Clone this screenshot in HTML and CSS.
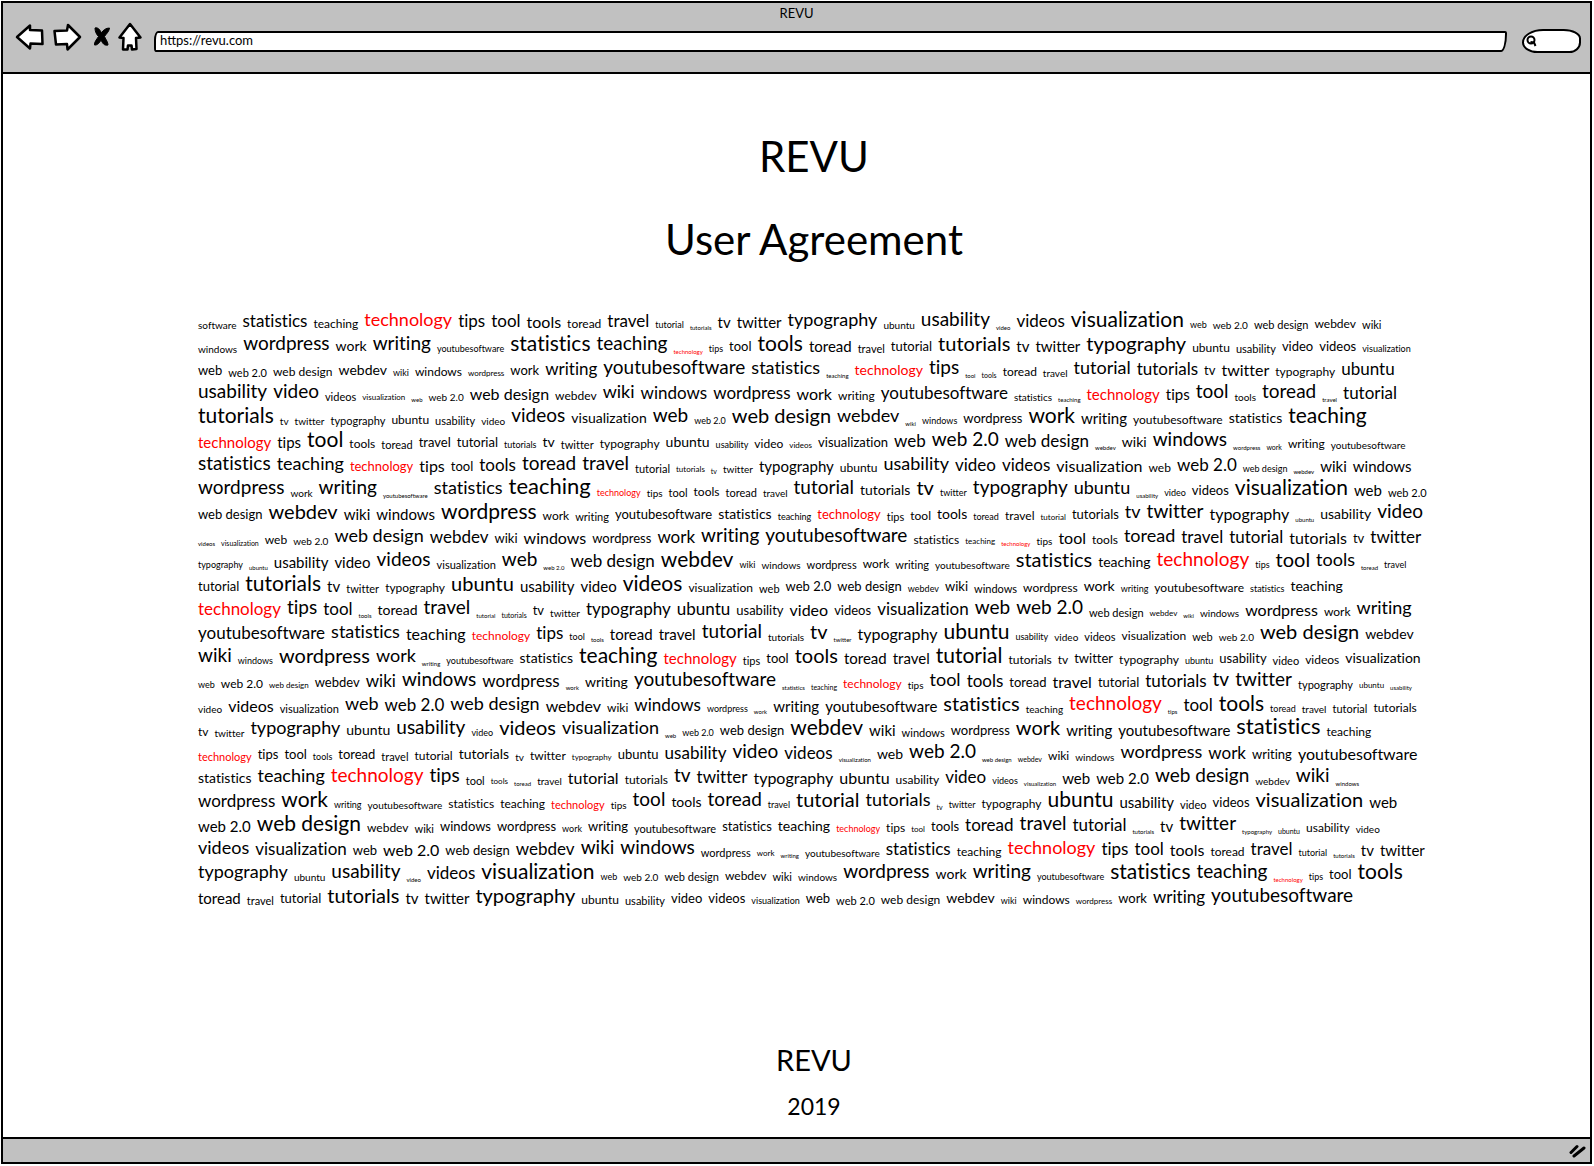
FILE: index.html
```html
<!DOCTYPE html>
<html lang="en">
<head>
<meta charset="utf-8">
<title>REVU</title>
<link rel="stylesheet" href="styles.css">
</head>
<body>
<div class="browser">
<header class="chrome">
<div class="chrome-title">REVU</div>
<div class="toolbar">
<button class="tool back" aria-label="Back"><svg width="30" height="28" viewBox="0 0 30 28"><path d="M2 14 15 2.500V7L27 7.500 27.500 21 15.500 20.500 15 25.500Z"/></svg></button>
<button class="tool forward" aria-label="Forward"><svg width="30" height="28" viewBox="0 0 30 28"><path d="M28 14 16 2 15 7.500 2.500 8 4 21.500 15 21 15.500 26.500Z"/></svg></button>
<button class="tool stop" aria-label="Stop"><svg width="18" height="22" viewBox="0 0 18 22"><path class="solid" d="M2 2C5 1 7 4 8.500 7 10 4 13 2 16.500 2 16 6 13 8 11.500 10.500 13 14 15 16 15 19 11 20 9.500 17 8 14 6.500 17 4 19.500 1.500 19 1 16 4 13 5.500 10.500 3 8 2 5 2 2Z"/></svg></button>
<button class="tool home" aria-label="Home"><svg width="24" height="30" viewBox="0 0 24 30"><path d="M12 2 1.500 15.500 5.500 16 5 27.500 9.500 27.500 10 23.500 13.500 23.500 14 27.500 18.500 27 18 16 22.500 15.500Z"/></svg></button>
<input class="address" type="text" aria-label="Address" value="https://revu.com">
<label class="search"><svg width="12" height="14" viewBox="0 0 12 14"><circle cx="5" cy="6" r="3.500"/><path d="M4.500 8 8 8.500 9.500 12"/></svg><input type="text" aria-label="Search"></label>
</div>
</header>
<main class="page">
<h1>REVU</h1>
<h2>User Agreement</h2>
<section class="cloud">
<p><span class="s10">software</span><span class="s17">statistics</span><span class="s12">teaching</span><span class="s18 hot">technology</span><span class="s17">tips</span><span class="s17">tool</span><span class="s16">tools</span><span class="s12">toread</span><span class="s17">travel</span><span class="s9">tutorial</span><span class="s6">tutorials</span><span class="s15">tv</span><span class="s15">twitter</span><span class="s18">typography</span><span class="s10">ubuntu</span><span class="s19">usability</span><span class="s6">video</span><span class="s17">videos</span><span class="s21">visualization</span><span class="s9">web</span><span class="s10">web 2.0</span><span class="s11">web design</span><span class="s12">webdev</span><span class="s11">wiki</span></p>
<p><span class="s10">windows</span><span class="s19">wordpress</span><span class="s14">work</span><span class="s19">writing</span><span class="s9">youtubesoftware</span><span class="s21">statistics</span><span class="s19">teaching</span><span class="s6 hot">technology</span><span class="s9">tips</span><span class="s13">tool</span><span class="s21">tools</span><span class="s15">toread</span><span class="s11">travel</span><span class="s13">tutorial</span><span class="s20">tutorials</span><span class="s15">tv</span><span class="s15">twitter</span><span class="s20">typography</span><span class="s12">ubuntu</span><span class="s11">usability</span><span class="s13">video</span><span class="s13">videos</span><span class="s9">visualization</span></p>
<p><span class="s13">web</span><span class="s11">web 2.0</span><span class="s12">web design</span><span class="s14">webdev</span><span class="s9">wiki</span><span class="s12">windows</span><span class="s8">wordpress</span><span class="s13">work</span><span class="s17">writing</span><span class="s19">youtubesoftware</span><span class="s18">statistics</span><span class="s6">teaching</span><span class="s14 hot">technology</span><span class="s19">tips</span><span class="s6">tool</span><span class="s7">tools</span><span class="s12">toread</span><span class="s10">travel</span><span class="s18">tutorial</span><span class="s17">tutorials</span><span class="s13">tv</span><span class="s16">twitter</span><span class="s12">typography</span><span class="s17">ubuntu</span></p>
<p><span class="s19">usability</span><span class="s19">video</span><span class="s11">videos</span><span class="s8">visualization</span><span class="s6">web</span><span class="s10">web 2.0</span><span class="s16">web design</span><span class="s12">webdev</span><span class="s18">wiki</span><span class="s17">windows</span><span class="s17">wordpress</span><span class="s16">work</span><span class="s12">writing</span><span class="s17">youtubesoftware</span><span class="s10">statistics</span><span class="s6">teaching</span><span class="s15 hot">technology</span><span class="s15">tips</span><span class="s19">tool</span><span class="s10">tools</span><span class="s19">toread</span><span class="s6">travel</span><span class="s17">tutorial</span></p>
<p><span class="s21">tutorials</span><span class="s10">tv</span><span class="s10">twitter</span><span class="s11">typography</span><span class="s12">ubuntu</span><span class="s11">usability</span><span class="s10">video</span><span class="s19">videos</span><span class="s14">visualization</span><span class="s19">web</span><span class="s9">web 2.0</span><span class="s20">web design</span><span class="s18">webdev</span><span class="s6">wiki</span><span class="s9">windows</span><span class="s13">wordpress</span><span class="s21">work</span><span class="s15">writing</span><span class="s12">youtubesoftware</span><span class="s14">statistics</span><span class="s21">teaching</span></p>
<p><span class="s15 hot">technology</span><span class="s15">tips</span><span class="s21">tool</span><span class="s12">tools</span><span class="s11">toread</span><span class="s13">travel</span><span class="s13">tutorial</span><span class="s9">tutorials</span><span class="s14">tv</span><span class="s11">twitter</span><span class="s12">typography</span><span class="s14">ubuntu</span><span class="s9">usability</span><span class="s12">video</span><span class="s8">videos</span><span class="s13">visualization</span><span class="s17">web</span><span class="s19">web 2.0</span><span class="s17">web design</span><span class="s6">webdev</span><span class="s14">wiki</span><span class="s19">windows</span><span class="s6">wordpress</span><span class="s7">work</span><span class="s12">writing</span><span class="s10">youtubesoftware</span></p>
<p><span class="s19">statistics</span><span class="s18">teaching</span><span class="s13 hot">technology</span><span class="s16">tips</span><span class="s13">tool</span><span class="s17">tools</span><span class="s19">toread</span><span class="s19">travel</span><span class="s11">tutorial</span><span class="s8">tutorials</span><span class="s7">tv</span><span class="s10">twitter</span><span class="s15">typography</span><span class="s12">ubuntu</span><span class="s18">usability</span><span class="s17">video</span><span class="s17">videos</span><span class="s16">visualization</span><span class="s12">web</span><span class="s17">web 2.0</span><span class="s9">web design</span><span class="s6">webdev</span><span class="s15">wiki</span><span class="s15">windows</span></p>
<p><span class="s19">wordpress</span><span class="s10">work</span><span class="s19">writing</span><span class="s6">youtubesoftware</span><span class="s18">statistics</span><span class="s22">teaching</span><span class="s9 hot">technology</span><span class="s10">tips</span><span class="s11">tool</span><span class="s12">tools</span><span class="s11">toread</span><span class="s10">travel</span><span class="s19">tutorial</span><span class="s14">tutorials</span><span class="s20">tv</span><span class="s9">twitter</span><span class="s19">typography</span><span class="s18">ubuntu</span><span class="s6">usability</span><span class="s9">video</span><span class="s13">videos</span><span class="s21">visualization</span><span class="s15">web</span><span class="s11">web 2.0</span></p>
<p><span class="s13">web design</span><span class="s20">webdev</span><span class="s15">wiki</span><span class="s15">windows</span><span class="s21">wordpress</span><span class="s12">work</span><span class="s11">writing</span><span class="s13">youtubesoftware</span><span class="s14">statistics</span><span class="s9">teaching</span><span class="s13 hot">technology</span><span class="s11">tips</span><span class="s12">tool</span><span class="s14">tools</span><span class="s9">toread</span><span class="s12">travel</span><span class="s8">tutorial</span><span class="s13">tutorials</span><span class="s18">tv</span><span class="s19">twitter</span><span class="s16">typography</span><span class="s6">ubuntu</span><span class="s14">usability</span><span class="s19">video</span></p>
<p><span class="s6">videos</span><span class="s7">visualization</span><span class="s12">web</span><span class="s10">web 2.0</span><span class="s18">web design</span><span class="s17">webdev</span><span class="s13">wiki</span><span class="s16">windows</span><span class="s13">wordpress</span><span class="s17">work</span><span class="s19">writing</span><span class="s19">youtubesoftware</span><span class="s12">statistics</span><span class="s8">teaching</span><span class="s6 hot">technology</span><span class="s10">tips</span><span class="s16">tool</span><span class="s12">tools</span><span class="s18">toread</span><span class="s17">travel</span><span class="s17">tutorial</span><span class="s16">tutorials</span><span class="s13">tv</span><span class="s17">twitter</span></p>
<p><span class="s9">typography</span><span class="s6">ubuntu</span><span class="s15">usability</span><span class="s15">video</span><span class="s19">videos</span><span class="s11">visualization</span><span class="s19">web</span><span class="s6">web 2.0</span><span class="s17">web design</span><span class="s21">webdev</span><span class="s9">wiki</span><span class="s10">windows</span><span class="s11">wordpress</span><span class="s12">work</span><span class="s11">writing</span><span class="s10">youtubesoftware</span><span class="s20">statistics</span><span class="s14">teaching</span><span class="s19 hot">technology</span><span class="s9">tips</span><span class="s20">tool</span><span class="s18">tools</span><span class="s6">toread</span><span class="s9">travel</span></p>
<p><span class="s13">tutorial</span><span class="s21">tutorials</span><span class="s15">tv</span><span class="s11">twitter</span><span class="s12">typography</span><span class="s20">ubuntu</span><span class="s15">usability</span><span class="s15">video</span><span class="s21">videos</span><span class="s12">visualization</span><span class="s11">web</span><span class="s13">web 2.0</span><span class="s13">web design</span><span class="s9">webdev</span><span class="s13">wiki</span><span class="s11">windows</span><span class="s12">wordpress</span><span class="s14">work</span><span class="s9">writing</span><span class="s12">youtubesoftware</span><span class="s9">statistics</span><span class="s14">teaching</span></p>
<p><span class="s17 hot">technology</span><span class="s19">tips</span><span class="s17">tool</span><span class="s6">tools</span><span class="s14">toread</span><span class="s19">travel</span><span class="s6">tutorial</span><span class="s7">tutorials</span><span class="s13">tv</span><span class="s10">twitter</span><span class="s17">typography</span><span class="s17">ubuntu</span><span class="s13">usability</span><span class="s16">video</span><span class="s13">videos</span><span class="s17">visualization</span><span class="s19">web</span><span class="s19">web 2.0</span><span class="s11">web design</span><span class="s8">webdev</span><span class="s6">wiki</span><span class="s10">windows</span><span class="s16">wordpress</span><span class="s12">work</span><span class="s18">writing</span></p>
<p><span class="s17">youtubesoftware</span><span class="s18">statistics</span><span class="s16">teaching</span><span class="s12 hot">technology</span><span class="s17">tips</span><span class="s9">tool</span><span class="s6">tools</span><span class="s15">toread</span><span class="s15">travel</span><span class="s19">tutorial</span><span class="s10">tutorials</span><span class="s20">tv</span><span class="s6">twitter</span><span class="s16">typography</span><span class="s21">ubuntu</span><span class="s9">usability</span><span class="s10">video</span><span class="s11">videos</span><span class="s12">visualization</span><span class="s11">web</span><span class="s10">web 2.0</span><span class="s20">web design</span><span class="s14">webdev</span></p>
<p><span class="s19">wiki</span><span class="s9">windows</span><span class="s20">wordpress</span><span class="s18">work</span><span class="s6">writing</span><span class="s9">youtubesoftware</span><span class="s14">statistics</span><span class="s21">teaching</span><span class="s15 hot">technology</span><span class="s11">tips</span><span class="s13">tool</span><span class="s20">tools</span><span class="s15">toread</span><span class="s15">travel</span><span class="s21">tutorial</span><span class="s12">tutorials</span><span class="s12">tv</span><span class="s13">twitter</span><span class="s12">typography</span><span class="s9">ubuntu</span><span class="s13">usability</span><span class="s11">video</span><span class="s12">videos</span><span class="s14">visualization</span></p>
<p><span class="s9">web</span><span class="s12">web 2.0</span><span class="s8">web design</span><span class="s13">webdev</span><span class="s17">wiki</span><span class="s19">windows</span><span class="s17">wordpress</span><span class="s6">work</span><span class="s14">writing</span><span class="s19">youtubesoftware</span><span class="s6">statistics</span><span class="s7">teaching</span><span class="s12 hot">technology</span><span class="s10">tips</span><span class="s18">tool</span><span class="s17">tools</span><span class="s13">toread</span><span class="s16">travel</span><span class="s13">tutorial</span><span class="s17">tutorials</span><span class="s19">tv</span><span class="s19">twitter</span><span class="s11">typography</span><span class="s8">ubuntu</span><span class="s6">usability</span></p>
<p><span class="s10">video</span><span class="s16">videos</span><span class="s11">visualization</span><span class="s18">web</span><span class="s17">web 2.0</span><span class="s18">web design</span><span class="s16">webdev</span><span class="s12">wiki</span><span class="s17">windows</span><span class="s9">wordpress</span><span class="s6">work</span><span class="s15">writing</span><span class="s15">youtubesoftware</span><span class="s20">statistics</span><span class="s10">teaching</span><span class="s19 hot">technology</span><span class="s6">tips</span><span class="s17">tool</span><span class="s21">tools</span><span class="s9">toread</span><span class="s10">travel</span><span class="s11">tutorial</span><span class="s12">tutorials</span></p>
<p><span class="s12">tv</span><span class="s10">twitter</span><span class="s18">typography</span><span class="s14">ubuntu</span><span class="s19">usability</span><span class="s9">video</span><span class="s20">videos</span><span class="s18">visualization</span><span class="s6">web</span><span class="s9">web 2.0</span><span class="s13">web design</span><span class="s21">webdev</span><span class="s15">wiki</span><span class="s11">windows</span><span class="s13">wordpress</span><span class="s20">work</span><span class="s15">writing</span><span class="s15">youtubesoftware</span><span class="s22">statistics</span><span class="s12">teaching</span></p>
<p><span class="s11 hot">technology</span><span class="s13">tips</span><span class="s13">tool</span><span class="s9">tools</span><span class="s13">toread</span><span class="s11">travel</span><span class="s12">tutorial</span><span class="s14">tutorials</span><span class="s10">tv</span><span class="s12">twitter</span><span class="s8">typography</span><span class="s13">ubuntu</span><span class="s17">usability</span><span class="s19">video</span><span class="s17">videos</span><span class="s6">visualization</span><span class="s14">web</span><span class="s19">web 2.0</span><span class="s6">web design</span><span class="s7">webdev</span><span class="s12">wiki</span><span class="s10">windows</span><span class="s18">wordpress</span><span class="s17">work</span><span class="s13">writing</span><span class="s16">youtubesoftware</span></p>
<p><span class="s14">statistics</span><span class="s18">teaching</span><span class="s19 hot">technology</span><span class="s19">tips</span><span class="s11">tool</span><span class="s8">tools</span><span class="s6">toread</span><span class="s10">travel</span><span class="s16">tutorial</span><span class="s12">tutorials</span><span class="s19">tv</span><span class="s17">twitter</span><span class="s16">typography</span><span class="s16">ubuntu</span><span class="s12">usability</span><span class="s17">video</span><span class="s9">videos</span><span class="s6">visualization</span><span class="s15">web</span><span class="s15">web 2.0</span><span class="s19">web design</span><span class="s10">webdev</span><span class="s19">wiki</span><span class="s6">windows</span></p>
<p><span class="s17">wordpress</span><span class="s21">work</span><span class="s9">writing</span><span class="s10">youtubesoftware</span><span class="s12">statistics</span><span class="s12">teaching</span><span class="s11 hot">technology</span><span class="s10">tips</span><span class="s19">tool</span><span class="s14">tools</span><span class="s19">toread</span><span class="s9">travel</span><span class="s20">tutorial</span><span class="s18">tutorials</span><span class="s7">tv</span><span class="s9">twitter</span><span class="s12">typography</span><span class="s21">ubuntu</span><span class="s15">usability</span><span class="s11">video</span><span class="s13">videos</span><span class="s20">visualization</span><span class="s15">web</span></p>
<p><span class="s15">web 2.0</span><span class="s21">web design</span><span class="s12">webdev</span><span class="s11">wiki</span><span class="s13">windows</span><span class="s13">wordpress</span><span class="s9">work</span><span class="s13">writing</span><span class="s11">youtubesoftware</span><span class="s13">statistics</span><span class="s14">teaching</span><span class="s9 hot">technology</span><span class="s12">tips</span><span class="s8">tool</span><span class="s13">tools</span><span class="s17">toread</span><span class="s19">travel</span><span class="s17">tutorial</span><span class="s6">tutorials</span><span class="s15">tv</span><span class="s19">twitter</span><span class="s6">typography</span><span class="s7">ubuntu</span><span class="s12">usability</span><span class="s10">video</span></p>
<p><span class="s18">videos</span><span class="s17">visualization</span><span class="s13">web</span><span class="s16">web 2.0</span><span class="s13">web design</span><span class="s17">webdev</span><span class="s19">wiki</span><span class="s19">windows</span><span class="s11">wordpress</span><span class="s8">work</span><span class="s6">writing</span><span class="s10">youtubesoftware</span><span class="s17">statistics</span><span class="s12">teaching</span><span class="s18 hot">technology</span><span class="s17">tips</span><span class="s17">tool</span><span class="s16">tools</span><span class="s12">toread</span><span class="s17">travel</span><span class="s9">tutorial</span><span class="s6">tutorials</span><span class="s15">tv</span><span class="s15">twitter</span></p>
<p><span class="s18">typography</span><span class="s10">ubuntu</span><span class="s19">usability</span><span class="s6">video</span><span class="s17">videos</span><span class="s21">visualization</span><span class="s9">web</span><span class="s10">web 2.0</span><span class="s11">web design</span><span class="s12">webdev</span><span class="s11">wiki</span><span class="s10">windows</span><span class="s19">wordpress</span><span class="s14">work</span><span class="s19">writing</span><span class="s9">youtubesoftware</span><span class="s21">statistics</span><span class="s19">teaching</span><span class="s6 hot">technology</span><span class="s9">tips</span><span class="s13">tool</span><span class="s21">tools</span></p>
<p><span class="s15">toread</span><span class="s11">travel</span><span class="s13">tutorial</span><span class="s20">tutorials</span><span class="s15">tv</span><span class="s15">twitter</span><span class="s20">typography</span><span class="s12">ubuntu</span><span class="s11">usability</span><span class="s13">video</span><span class="s13">videos</span><span class="s9">visualization</span><span class="s13">web</span><span class="s11">web 2.0</span><span class="s12">web design</span><span class="s14">webdev</span><span class="s9">wiki</span><span class="s12">windows</span><span class="s8">wordpress</span><span class="s13">work</span><span class="s17">writing</span><span class="s19">youtubesoftware</span></p>
</section>
<footer class="page-foot">
<p class="brand">REVU</p>
<p class="year">2019</p>
</footer>
</main>
<div class="statusbar"><svg width="18" height="16" viewBox="0 0 18 16"><path d="M2 9.500 8 3.500M5 13 15 5"/></svg></div>
</div>
</body>
</html>
```
FILE: styles.css
```css
* { box-sizing: border-box; }
body {
  margin: 0;
  padding: 1px 2px 2px 1px;
  background: #fff;
  color: #000;
  font-family: Lato, "Liberation Sans", sans-serif;
  font-variant-ligatures: none;
}
h1, h2, p { margin: 0; font-weight: 400; }
.browser {
  display: flex;
  flex-direction: column;
  min-height: calc(100vh - 3px);
  border: 2px solid #000;
}
.chrome {
  height: 71px;
  background: #c1c1c1;
  border-bottom: 2px solid #000;
}
.chrome-title {
  height: 20px;
  font-size: 13px;
  line-height: 20px;
  text-align: center;
}
.toolbar {
  display: flex;
  align-items: center;
  height: 28px;
  padding: 0 9px 0 12px;
}
.tool {
  display: flex;
  padding: 0;
  border: 0;
  background: none;
}
.tool svg, .search svg { display: block; flex: none; }
.tool path {
  fill: #fff;
  stroke: #000;
  stroke-width: 2.5;
  stroke-linejoin: round;
}
.tool .solid { fill: #000; stroke-width: 1; }
.forward { margin-left: 7px; }
.stop { margin-left: 11px; }
.home { margin-left: 7px; }
.address {
  flex: 1;
  min-width: 0;
  height: 21px;
  margin: 8px 15px 0 12px;
  padding: 0 4px 2px;
  border: 2px solid #000;
  border-radius: 4px 2px 6px 2px / 9px 2px 18px 4px;
  background: #fff;
  color: #000;
  font: 13px Lato, "Liberation Sans", sans-serif;
}
.search {
  display: flex;
  align-items: center;
  width: 59px;
  height: 24px;
  margin-top: 8px;
  padding-left: 2px;
  border: 2px solid #000;
  border-radius: 22px 18px 12px 16px / 14px 10px 11px 11px;
  background: #fff;
}
.search input {
  width: 36px;
  padding: 0;
  border: 0;
  background: none;
}
.search svg { fill: none; stroke: #000; stroke-width: 2; }
.page {
  display: flex;
  flex: 1;
  flex-direction: column;
  padding: 57px 160px 18px 195px;
}
h1 {
  font-size: 42px;
  line-height: 50px;
  text-align: center;
}
h2 {
  margin-top: 33px;
  font-size: 42px;
  line-height: 50px;
  text-align: center;
}
.cloud { margin-top: 43px; }
.cloud p {
  display: flex;
  align-items: flex-end;
  gap: 6px;
  height: 24px;
  line-height: 1.2;
  white-space: nowrap;
}
.hot { color: #f00; }
.s6 { font-size: 6px; }
.s7 { font-size: 7px; }
.s8 { font-size: 8px; }
.s9 { font-size: 9px; }
.s10 { font-size: 10px; }
.s11 { font-size: 11px; }
.s12 { font-size: 12px; }
.s13 { font-size: 13px; }
.s14 { font-size: 14px; }
.s15 { font-size: 15px; }
.s16 { font-size: 16px; }
.s17 { font-size: 17px; }
.s18 { font-size: 18px; }
.s19 { font-size: 19px; }
.s20 { font-size: 20px; }
.s21 { font-size: 21px; }
.s22 { font-size: 22px; }
.page-foot {
  margin-top: auto;
  text-align: center;
}
.brand { font-size: 29px; line-height: 34px; }
.year { margin-top: 16px; font-size: 23px; line-height: 26px; }
.statusbar {
  display: flex;
  align-items: center;
  justify-content: flex-end;
  height: 25px;
  padding-right: 3px;
  border-top: 2px solid #000;
  background: #c1c1c1;
}
.statusbar path {
  fill: none;
  stroke: #000;
  stroke-width: 3;
  stroke-linecap: round;
}
```
